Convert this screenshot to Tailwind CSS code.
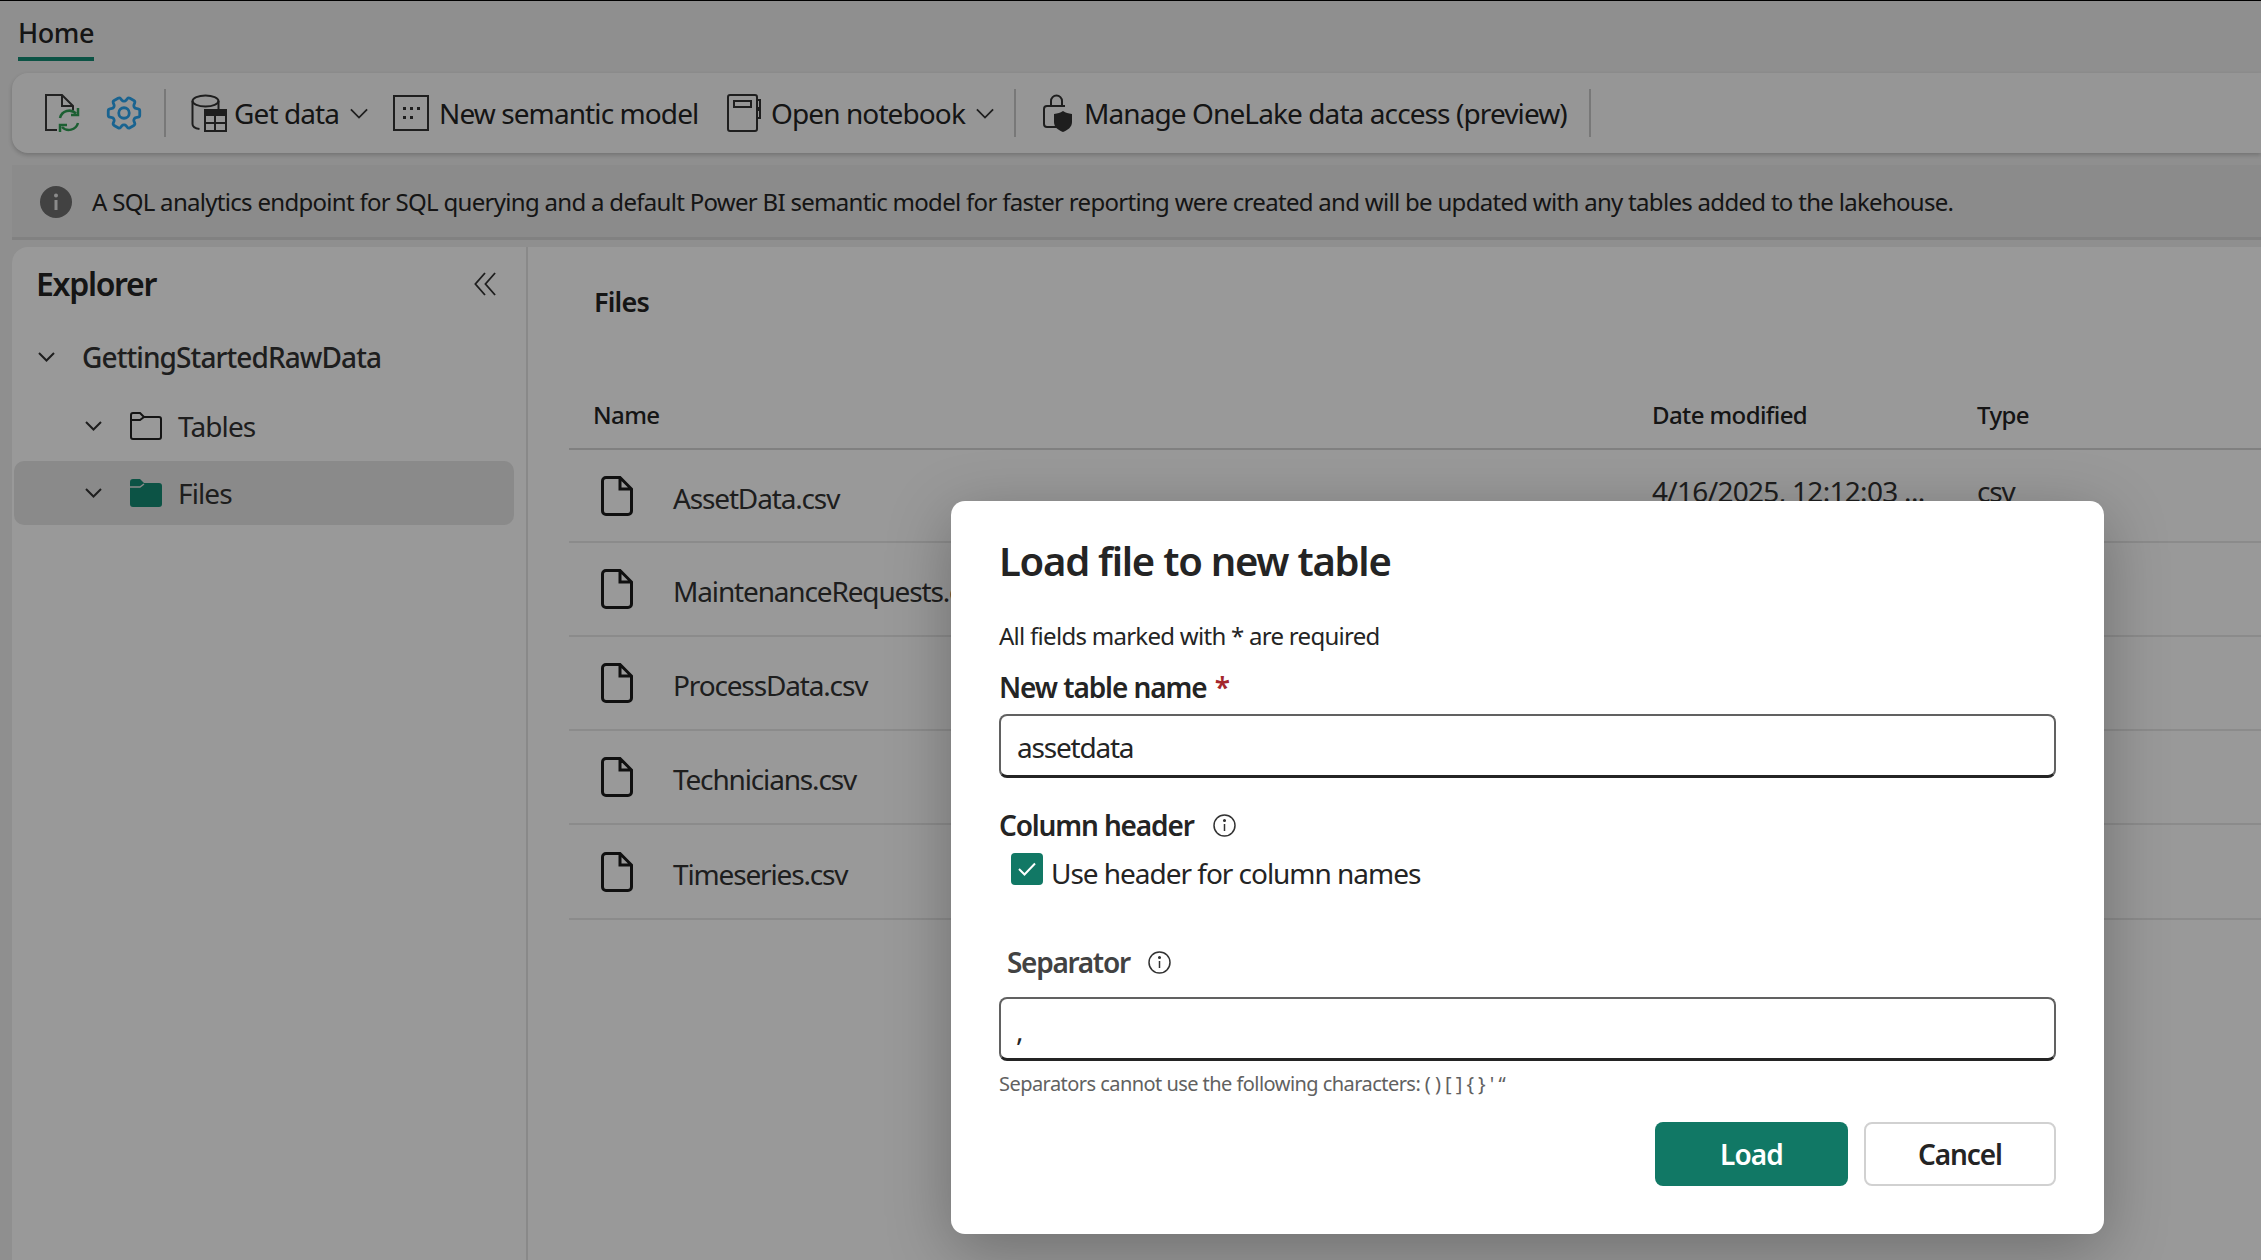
<!DOCTYPE html>
<html>
<head>
<meta charset="utf-8">
<script src="https://cdn.jsdelivr.net/npm/@tailwindcss/browser@4"></script>
</head>
<body class="[font-family:'Noto_Sans',sans-serif] text-[#242424] bg-[#eeeeee]">
<div class="relative w-[2261px] h-[1260px] overflow-hidden flex flex-col border-t border-black">
  <!-- Tabs -->
  <div class="h-[72px] pl-[18px] shrink-0">
    <div class="inline-block h-[60px] border-b-4 border-[#148a73] text-[27px] leading-[64px] font-medium tracking-[-0.45px]">Home</div>
  </div>
  <!-- Toolbar -->
  <div class="ml-[12px] h-[80px] shrink-0 bg-[#fbfbfb] rounded-l-[16px] flex items-center pl-[33px] text-[28px] shadow-[0_2px_4px_rgba(0,0,0,0.2)] tracking-[-0.9px]">
    <svg class="w-[36px] h-[38px]" viewBox="0 0 36 38" fill="none"><path d="M12 36H1V1H17L28 12V16M17 1V12H28" stroke="#3a3a3a" stroke-width="2"/><path d="M15 24a9.500 9.500 0 0 1 16-4.500M33 29a9.500 9.500 0 0 1-16 4" stroke="#2f9e54" stroke-width="2.500"/><path d="M33 14v7h-7M15 38v-7h7" stroke="#2f9e54" stroke-width="2.500"/></svg>
    <svg class="ml-[22px] w-[42px] h-[42px]" viewBox="0 0 24 24" fill="none" stroke="#2aa6f0" stroke-width="1.600"><path transform="rotate(90 12 12)" d="M9.594 3.940c.09-.542.56-.94 1.110-.94h2.593c.55 0 1.020.398 1.110.94l.213 1.281c.063.374.313.686.645.870.074.04.147.083.22.127.325.196.72.257 1.075.124l1.217-.456a1.125 1.125 0 0 1 1.370.49l1.296 2.247a1.125 1.125 0 0 1-.26 1.431l-1.003.827c-.293.241-.438.613-.43.992a7.723 7.723 0 0 1 0 .255c-.008.378.137.75.43.991l1.004.827c.424.35.534.955.26 1.430l-1.298 2.247a1.125 1.125 0 0 1-1.369.491l-1.217-.456c-.355-.133-.75-.072-1.076.124a6.470 6.470 0 0 1-.22.128c-.331.183-.581.495-.644.869l-.213 1.281c-.09.543-.56.94-1.110.94h-2.594c-.55 0-1.019-.398-1.110-.94l-.213-1.281c-.062-.374-.312-.686-.644-.87a6.520 6.520 0 0 1-.22-.127c-.325-.196-.72-.257-1.076-.124l-1.217.456a1.125 1.125 0 0 1-1.369-.49l-1.297-2.247a1.125 1.125 0 0 1 .26-1.431l1.004-.827c.292-.24.437-.613.43-.991a6.932 6.932 0 0 1 0-.255c.007-.38-.138-.751-.43-.992l-1.004-.827a1.125 1.125 0 0 1-.26-1.430l1.297-2.247a1.125 1.125 0 0 1 1.370-.491l1.216.456c.356.133.751.072 1.076-.124.072-.044.146-.086.22-.128.332-.183.582-.495.644-.869l.214-1.280Z"/><circle cx="12" cy="12" r="3"/></svg>
    <div class="ml-[19px] w-[2px] h-[48px] bg-[#c8c8c8]"></div>
    <svg class="ml-[25px] w-[36px] h-[38px]" viewBox="0 0 36 38" fill="none" stroke="#333" stroke-width="2"><ellipse cx="14.500" cy="7" rx="13" ry="5.500"/><path d="M1.500 7V30c0 3 3 4.500 7 5M27.500 7v8"/><rect x="14" y="16" width="21" height="21" fill="#fafafa"/><path d="M14 19h21M24 22v15M14 29h21" /><rect x="14" y="16" width="21" height="5" fill="#333"/></svg>
    <span class="ml-[7px] w-[106px] whitespace-nowrap">Get data</span>
    <svg class="ml-[10px] w-[18px] h-[11px]" viewBox="0 0 20 12" fill="none" stroke="#333" stroke-width="2"><path d="M1 1.500l9 9 9-9"/></svg>
    <svg class="ml-[25px] w-[36px] h-[36px]" viewBox="0 0 36 36" fill="none"><rect x="1" y="1" width="34" height="34" stroke="#333" stroke-width="2"/><g fill="#333"><rect x="10" y="12" width="3" height="3"/><rect x="17" y="12" width="3" height="3"/><rect x="24" y="12" width="3" height="3"/><rect x="10" y="21" width="3" height="3"/><rect x="17" y="21" width="3" height="3"/></g></svg>
    <span class="ml-[10px] whitespace-nowrap w-[258px]">New semantic model</span>
    <svg class="ml-[30px] w-[34px] h-[38px]" viewBox="0 0 34 38" fill="none" stroke="#333" stroke-width="2"><rect x="1" y="1" width="29" height="36" rx="2"/><rect x="7" y="7" width="17" height="6" stroke-width="2"/><path d="M30 6h3v8h-3M30 16h3v8h-3"/></svg>
    <span class="ml-[10px] whitespace-nowrap w-[195px]">Open notebook</span>
    <svg class="ml-[10px] w-[18px] h-[11px]" viewBox="0 0 20 12" fill="none" stroke="#333" stroke-width="2"><path d="M1 1.500l9 9 9-9"/></svg>
    <div class="ml-[20px] w-[2px] h-[48px] bg-[#c8c8c8]"></div>
    <svg class="ml-[27px] w-[30px] h-[38px]" viewBox="0 0 30 38" fill="none"><path d="M8 12V7a5.500 5.500 0 0 1 11 0v5" stroke="#333" stroke-width="2"/><path d="M15 33H4a3 3 0 0 1-3-3V15a3 3 0 0 1 3-3h18" stroke="#333" stroke-width="2"/><path d="M20 17c3 2 5 2.500 9 3v8c0 5-4 8-9 10-5-2-9-5-9-10v-8c4-.5 6-1 9-3z" fill="#333"/></svg>
    <span class="ml-[11px] whitespace-nowrap w-[490px]">Manage OneLake data access (preview)</span>
    <div class="ml-[15px] w-[2px] h-[48px] bg-[#c8c8c8]"></div>
  </div>
  <!-- Banner -->
  <div class="ml-[12px] mt-[12px] h-[75px] shrink-0 bg-[#e8e8e8] border-b-[3px] border-[#d8d8d8] flex items-center pl-[28px] pt-[1px] text-[24px] tracking-[-0.7px]">
    <svg class="w-[32px] h-[32px] shrink-0" viewBox="0 0 32 32"><circle cx="16" cy="16" r="16" fill="#6e6e6e"/><rect x="14.500" y="14" width="3" height="10" fill="#e8e8e8"/><circle cx="16" cy="9.500" r="2" fill="#e8e8e8"/></svg>
    <span class="ml-[20px] whitespace-nowrap">A SQL analytics endpoint for SQL querying and a default Power BI semantic model for faster reporting were created and will be updated with any tables added to the lakehouse.</span>
  </div>
  <!-- Panels -->
  <div class="ml-[12px] mt-[7px] flex-1 flex min-h-0">
    <aside class="w-[516px] shrink-0 bg-white rounded-tl-[16px] border-r-[2px] border-[#e4e4e4] pt-[12px]">
      <div class="h-[50px] flex items-center justify-between pl-[24px] pr-[30px]">
        <span class="text-[32px] font-semibold tracking-[-1.3px]">Explorer</span>
        <svg class="w-[22px] h-[26px]" viewBox="0 0 24 26" fill="none" stroke="#333" stroke-width="2"><path d="M12 1L1.500 13 12 25M23 1L12.500 13 23 25"/></svg>
      </div>
      <div class="mt-[26px] h-[44px] flex items-center pl-[26px] text-[28px] font-medium text-[#333] tracking-[-0.9px]">
        <svg class="w-[17px] h-[10px]" viewBox="0 0 17 10" fill="none" stroke="#333" stroke-width="2"><path d="M1 1l7.500 7.500L16 1"/></svg>
        <span class="ml-[27px]">GettingStartedRawData</span>
      </div>
      <div class="mt-[25px] h-[44px] flex items-center pl-[73px] text-[28px] text-[#333] tracking-[-0.9px]">
        <svg class="w-[17px] h-[10px]" viewBox="0 0 17 10" fill="none" stroke="#333" stroke-width="2"><path d="M1 1l7.500 7.500L16 1"/></svg>
        <svg class="ml-[28px] w-[32px] h-[28px]" viewBox="0 0 32 28" fill="none" stroke="#222" stroke-width="2"><path d="M3 1h7l4 4h15a2 2 0 0 1 2 2v18a2 2 0 0 1-2 2H3a2 2 0 0 1-2-2V3a2 2 0 0 1 2-2zM1 8h9l4-3"/></svg>
        <span class="ml-[16px]">Tables</span>
      </div>
      <div class="mt-[13px] ml-[2px] mr-[12px] h-[64px] rounded-[10px] bg-[#e6e6e6] flex items-center pl-[71px] text-[28px] text-[#333] tracking-[-0.9px]">
        <svg class="w-[17px] h-[10px]" viewBox="0 0 17 10" fill="none" stroke="#333" stroke-width="2"><path d="M1 1l7.500 7.500L16 1"/></svg>
        <svg class="ml-[28px] w-[32px] h-[28px]" viewBox="0 0 32 28"><path fill="#148a73" d="M3 0h7l4 4h15a3 3 0 0 1 3 3v18a3 3 0 0 1-3 3H3a3 3 0 0 1-3-3V3a3 3 0 0 1 3-3z"/><path d="M0 8h10l4-3" fill="none" stroke="#e6e6e6" stroke-width="1.500"/></svg>
        <span class="ml-[16px]">Files</span>
      </div>
    </aside>
    <main class="flex-1 bg-white pl-[41px] min-w-0">
      <div class="h-[113px] pl-[25px] pt-[36px] text-[27px] font-semibold leading-[38px] tracking-[-0.8px]">Files</div>
      <div class="h-[90px] grid grid-cols-[1083px_325px_1fr] items-center border-b-[2px] border-[#d6d6d6] text-[24px] font-medium tracking-[-0.6px] pt-[22px]">
        <span class="pl-[24px]">Name</span><span>Date modified</span><span>Type</span>
      </div>
      <div class="h-[93px] grid grid-cols-[1083px_325px_1fr] items-center border-b-[2px] border-[#e8e8e8] text-[28px] text-[#333] tracking-[-1.15px]">
        <div class="flex items-center pl-[32px]"><svg class="w-[32px] h-[40px]" viewBox="0 0 32 40" fill="none" stroke="#1c1c1c" stroke-width="3"><path d="M5 1.500h14L30.500 13v22a3.500 3.500 0 0 1-3.500 3.500H5A3.500 3.500 0 0 1 1.500 35V5A3.500 3.500 0 0 1 5 1.500zM19 1.500V13h11.500"/></svg><span class="ml-[40px] pt-[4px]">AssetData.csv</span></div>
        <span class="-mt-[10px] tracking-[-0.7px]">4/16/2025, 12:12:03 ...</span><span class="-mt-[10px]">csv</span>
      </div>
      <div class="h-[94px] flex items-center border-b-[2px] border-[#e8e8e8] text-[28px] text-[#333] tracking-[-1.15px] pl-[32px]"><svg class="w-[32px] h-[40px]" viewBox="0 0 32 40" fill="none" stroke="#1c1c1c" stroke-width="3"><path d="M5 1.500h14L30.500 13v22a3.500 3.500 0 0 1-3.500 3.500H5A3.500 3.500 0 0 1 1.500 35V5A3.500 3.500 0 0 1 5 1.500zM19 1.500V13h11.500"/></svg><span class="ml-[40px] pt-[4px]">MaintenanceRequests.csv</span></div>
      <div class="h-[94px] flex items-center border-b-[2px] border-[#e8e8e8] text-[28px] text-[#333] tracking-[-1.15px] pl-[32px]"><svg class="w-[32px] h-[40px]" viewBox="0 0 32 40" fill="none" stroke="#1c1c1c" stroke-width="3"><path d="M5 1.500h14L30.500 13v22a3.500 3.500 0 0 1-3.500 3.500H5A3.500 3.500 0 0 1 1.500 35V5A3.500 3.500 0 0 1 5 1.500zM19 1.500V13h11.500"/></svg><span class="ml-[40px] pt-[4px]">ProcessData.csv</span></div>
      <div class="h-[94px] flex items-center border-b-[2px] border-[#e8e8e8] text-[28px] text-[#333] tracking-[-1.15px] pl-[32px]"><svg class="w-[32px] h-[40px]" viewBox="0 0 32 40" fill="none" stroke="#1c1c1c" stroke-width="3"><path d="M5 1.500h14L30.500 13v22a3.500 3.500 0 0 1-3.500 3.500H5A3.500 3.500 0 0 1 1.500 35V5A3.500 3.500 0 0 1 5 1.500zM19 1.500V13h11.500"/></svg><span class="ml-[40px] pt-[4px]">Technicians.csv</span></div>
      <div class="h-[95px] flex items-center border-b-[2px] border-[#e8e8e8] text-[28px] text-[#333] tracking-[-1.15px] pl-[32px]"><svg class="w-[32px] h-[40px]" viewBox="0 0 32 40" fill="none" stroke="#1c1c1c" stroke-width="3"><path d="M5 1.500h14L30.500 13v22a3.500 3.500 0 0 1-3.500 3.500H5A3.500 3.500 0 0 1 1.500 35V5A3.500 3.500 0 0 1 5 1.500zM19 1.500V13h11.500"/></svg><span class="ml-[40px] pt-[4px]">Timeseries.csv</span></div>
    </main>
  </div>
  <!-- Dim overlay -->
  <div class="absolute inset-0 bg-black/40"></div>
  <!-- Dialog -->
  <div class="absolute left-[951px] top-[500px] w-[1153px] h-[733px] bg-white rounded-[14px] shadow-[0_16px_64px_rgba(0,0,0,0.28)] pl-[48px] pr-[48px] flex flex-col">
    <h2 class="mt-[32px] h-[56px] leading-[56px] text-[40px] font-semibold tracking-[-1.25px]">Load file to new table</h2>
    <p class="mt-[30px] h-[34px] leading-[34px] text-[24px] tracking-[-0.72px]">All fields marked with * are required</p>
    <label class="mt-[15px] h-[38px] leading-[38px] text-[28px] font-semibold tracking-[-1.1px]">New table name <span class="ml-[2px] text-[#a4262c]">*</span></label>
    <div class="mt-[8px] h-[64px] w-full rounded-[8px] border-2 border-[#616161] border-b-[3px] border-b-[#242424] pl-[16px] pt-[3px] flex items-center text-[28px] tracking-[-1.2px]">assetdata</div>
    <div class="mt-[28px] h-[38px] flex items-center text-[28px] font-semibold tracking-[-1.15px]">Column header
      <svg class="ml-[19px] w-[23px] h-[23px]" viewBox="0 0 23 23" fill="none" stroke="#333" stroke-width="1.500"><circle cx="11.500" cy="11.500" r="10.500"/><path d="M11.500 10v7"/><circle cx="11.500" cy="6.500" r=".8" fill="#333"/></svg>
    </div>
    <div class="h-[34px] mt-[10px] pl-[12px] flex items-start text-[28px] tracking-[-1.03px]">
      <span class="w-[32px] h-[32px] -mt-[1px] rounded-[4px] bg-[#117865] flex items-center justify-center shrink-0"><svg class="w-[18px] h-[14px]" viewBox="0 0 18 14" fill="none" stroke="#fff" stroke-width="2"><path d="M1 7l5.500 5.500L17 1.500"/></svg></span>
      <span class="ml-[8px] leading-[38px] h-[34px]">Use header for column names</span>
    </div>
    <div class="mt-[55px] h-[38px] pl-[8px] flex items-center text-[28px] font-semibold text-[#424242] tracking-[-1.3px]">Separator
      <svg class="ml-[18px] w-[23px] h-[23px]" viewBox="0 0 23 23" fill="none" stroke="#333" stroke-width="1.500"><circle cx="11.500" cy="11.500" r="10.500"/><path d="M11.500 10v7"/><circle cx="11.500" cy="6.500" r=".8" fill="#333"/></svg>
    </div>
    <div class="mt-[16px] h-[64px] w-full rounded-[8px] border-2 border-[#616161] border-b-[3px] border-b-[#242424] pl-[15px] pt-[3px] flex items-center text-[28px]">,</div>
    <p class="mt-[9px] h-[28px] leading-[28px] text-[20px] text-[#616161] tracking-[-0.55px]">Separators cannot use the following characters: ( ) [ ] { } ' “</p>
    <div class="mt-[24px] flex justify-end gap-[16px]">
      <button class="w-[193px] h-[64px] rounded-[8px] bg-[#117865] text-white text-[28px] font-semibold tracking-[-0.9px]">Load</button>
      <button class="w-[192px] h-[64px] rounded-[8px] border-2 border-[#d1d1d1] text-[28px] font-semibold tracking-[-1.1px]">Cancel</button>
    </div>
  </div>
</div>
</body>
</html>
